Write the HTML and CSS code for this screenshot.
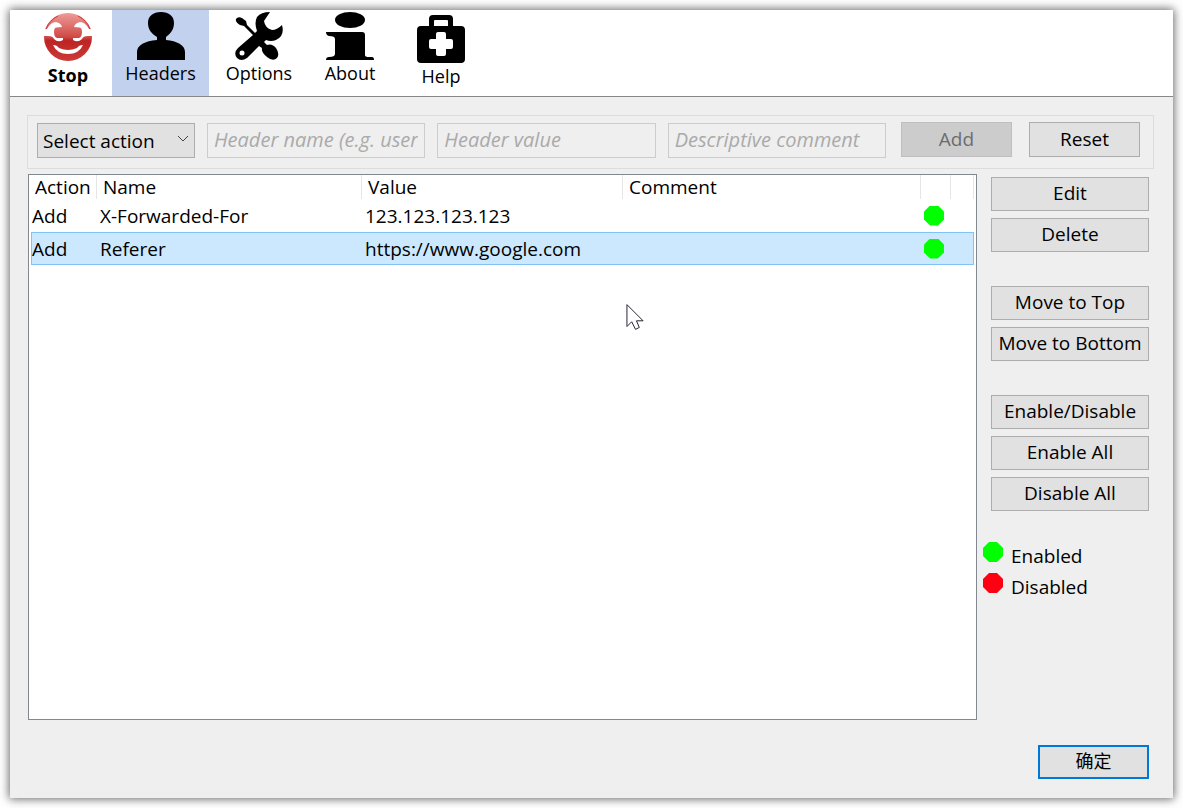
FILE: index.html
```html
<!DOCTYPE html>
<html lang="en">
<head>
<meta charset="utf-8">
<title>Headers</title>
<link rel="stylesheet" href="styles.css">
</head>
<body>
<main class="window">
  <nav class="toolbar" aria-label="Sections">
    <button type="button" class="tool tool-stop">
      <svg class="tool-icon" viewBox="0 0 48 48" aria-hidden="true">
        <defs>
          <linearGradient id="red" x1="0" y1="0" x2="0" y2="1">
            <stop offset="0" stop-color="#ee9c98"/>
            <stop offset=".5" stop-color="#d04a47"/>
            <stop offset=".58" stop-color="#bd2423"/>
            <stop offset="1" stop-color="#cc3a37"/>
          </linearGradient>
          <mask id="face">
            <circle cx="24" cy="24" r="24" fill="#fff"/>
            <g id="eye"><path d="M-2 17L3 16Q7 9 12 9Q17 10 18 14L12 14.500Q10 15 10 19Q10 24 13 25H19V27Q14 30 10 26Q9 23 4 23L-2 23Z" fill="#000"/></g>
            <use href="#eye" transform="translate(48 0) scale(-1 1)"/>
            <path d="M9 32Q13 32 15 35Q24 39 33 35Q35 32 39 32Q35 41 24 41Q13 41 9 32Z" fill="#000"/>
          </mask>
        </defs>
        <rect width="48" height="48" fill="url(#red)" mask="url(#face)"/>
        <path d="M2 16A23.500 23.500 0 0 1 14 3M46 16A23.500 23.500 0 0 0 34 3" fill="none" stroke="#cf3734"/>
      </svg>
      <span>Stop</span>
    </button>
    <button type="button" class="tool tool-headers" aria-current="page">
      <svg class="tool-icon" viewBox="0 0 48 48" aria-hidden="true"><path d="M24 0C32 0 37 4 37 11C37 18 33 22 29 25V28C40 29 48 33 48 40V48H0V40C0 33 8 29 20 28V25C15 22 11 18 11 11C11 4 16 0 24 0Z"/></svg>
      <span>Headers</span>
    </button>
    <button type="button" class="tool tool-options">
      <svg class="tool-icon" viewBox="0 0 48 48" aria-hidden="true"><path d="M1 7Q3 4 7 6L11 9L12 13L20 21L22 19Q19 11 22 5Q26 0 35 0L29 9Q30 16 37 18Q42 18 47 13Q50 24 41 28Q36 30 31 28L29 30L32 33Q37 31 41 36Q45 42 42 46Q38 50 32 45Q26 40 27 36L24 34L12 46Q6 50 2 46Q-2 41 3 36L18 23L9 14L5 13Q0 10 1 7Z"/><circle cx="7" cy="41" r="2.500" fill="#fff"/></svg>
      <span>Options</span>
    </button>
    <button type="button" class="tool tool-about">
      <svg class="tool-icon" viewBox="0 0 48 48" aria-hidden="true"><ellipse cx="24" cy="8" rx="15" ry="8"/><path d="M0 20H36Q39 20 39 23V43Q39 45 43 45H46Q48 45 48 48H0Q0 45 3 45Q9 45 9 42V27Q9 24 3 24Q0 23 0 20Z"/></svg>
      <span>About</span>
    </button>
    <button type="button" class="tool tool-help">
      <svg class="tool-icon" viewBox="0 0 48 48" aria-hidden="true"><path fill-rule="evenodd" d="M12 11V4Q12 0 16 0H32Q36 0 36 4V11H44Q48 11 48 15V44Q48 48 44 48H4Q0 48 0 44V15Q0 11 4 11ZM17 11H31V6Q31 5 30 5H18Q17 5 17 6ZM19 19V24H14Q12 24 12 26V32Q12 34 14 34H19V39Q19 41 21 41H27Q29 41 29 39V34H34Q36 34 36 32V26Q36 24 34 24H29V19Q29 17 27 17H21Q19 17 19 19Z"/></svg>
      <span>Help</span>
    </button>
  </nav>

  <form class="entry">
    <span class="select-wrap">
      <select class="field action" aria-label="Select action"><option>Select action</option></select>
      <svg class="chevron" viewBox="0 0 12 8" aria-hidden="true"><path d="M1 1L6 6L11 1"/></svg>
    </span>
    <input class="field text" type="text" aria-label="Header name" placeholder="Header name (e.g. user-agent)" disabled>
    <input class="field text" type="text" aria-label="Header value" placeholder="Header value" disabled>
    <input class="field text" type="text" aria-label="Descriptive comment" placeholder="Descriptive comment" disabled>
    <button class="button add" type="button" disabled>Add</button>
    <button class="button reset" type="reset">Reset</button>
  </form>

  <div class="body">
    <div class="list">
      <table class="headers">
        <colgroup><col class="col-action"><col class="col-name"><col class="col-value"><col><col class="col-state"><col class="col-end"></colgroup>
        <thead><tr><th>Action</th><th>Name</th><th>Value</th><th>Comment</th><th></th><th></th></tr></thead>
        <tbody>
          <tr><td>Add</td><td>X-Forwarded-For</td><td>123.123.123.123</td><td></td><td><span class="dot"></span></td><td></td></tr>
          <tr class="selected"><td>Add</td><td>Referer</td><td>https://www.google.com</td><td></td><td><span class="dot"></span></td><td></td></tr>
        </tbody>
      </table>
    </div>
    <aside class="side">
      <div class="group">
        <button class="button" type="button">Edit</button>
        <button class="button" type="button">Delete</button>
      </div>
      <div class="group">
        <button class="button" type="button">Move to Top</button>
        <button class="button" type="button">Move to Bottom</button>
      </div>
      <div class="group">
        <button class="button" type="button">Enable/Disable</button>
        <button class="button" type="button">Enable All</button>
        <button class="button" type="button">Disable All</button>
      </div>
      <ul class="legend">
        <li><span class="dot"></span><span>Enabled</span></li>
        <li><span class="dot off"></span><span>Disabled</span></li>
      </ul>
    </aside>
  </div>

  <footer class="footer"><button class="button ok" type="button" lang="zh-CN">确定</button></footer>
</main>
<svg class="cursor" viewBox="0 0 20 28" aria-hidden="true"><path d="M1 1V24L6 19L10 27L14 25L11 18H18Z"/></svg>
</body>
</html>
```
FILE: styles.css
```css
* {
  box-sizing: border-box;
}

body {
  margin: 0;
  padding: 10px;
  min-height: 100vh;
  display: flex;
  background: #fff;
  color: #000;
  font: 18px/24px "Open Sans", "Noto Sans CJK SC", sans-serif;
}

button, input, select {
  font: inherit;
  color: inherit;
}

.window {
  flex: 1;
  display: flex;
  flex-direction: column;
  min-width: 0;
  background: #efefef;
  box-shadow: 0 0 9px 1px rgba(0, 0, 0, .6);
}

.toolbar {
  display: flex;
  height: 87px;
  padding-left: 14px;
  background: #fff;
  border-bottom: 1px solid #868686;
}

.tool {
  display: flex;
  flex-direction: column;
  align-items: center;
  gap: 1px;
  width: 100px;
  padding: 2px 0 0;
  border: 0;
  background: none;
}

.tool-icon {
  width: 48px;
  height: 48px;
}

.tool-stop {
  gap: 2px;
  width: 88px;
  padding-top: 3px;
  font-weight: 700;
}

.tool-headers {
  width: 97px;
  background: #c2d1ed;
}

.tool-about {
  width: 82px;
}

.tool-help {
  padding-top: 5px;
}

.entry {
  display: flex;
  align-items: flex-end;
  margin: 18px 19px 0 17px;
  padding: 6px 13px 10px 9px;
  border: 1px solid #dcdcdc;
}

.field {
  height: 35px;
  border: 1px solid #ccc;
  border-radius: 0;
}

.select-wrap {
  position: relative;
  display: flex;
  width: 158px;
}

.action {
  width: 100%;
  padding: 0 24px 0 5px;
  appearance: none;
  background: #e1e1e1;
  border-color: #adadad;
  font-size: 19px;
}

.chevron {
  position: absolute;
  right: 6px;
  top: 12px;
  width: 12px;
  height: 8px;
  fill: none;
  stroke: #444;
  pointer-events: none;
}

.text {
  flex: 1;
  min-width: 0;
  margin-left: 12px;
  padding: 0 6px 2px;
  background: #efefef;
  font-size: 20px;
}

.text::placeholder {
  color: #aaa;
  font-style: italic;
}

.button {
  height: 34px;
  padding: 0 2px 2px;
  border: 1px solid #adadad;
  background: #e1e1e1;
  font-size: 19px;
  white-space: nowrap;
}

.add, .reset {
  width: 111px;
  height: 35px;
  margin-bottom: 1px;
}

.add {
  margin-left: 15px;
  background: #ccc;
  border-color: #bfbfbf;
  color: #6d6d6d;
}

.reset {
  margin-left: 17px;
}

.body {
  flex: 1;
  display: flex;
  margin: 5px 24px 0 18px;
  font-size: 19px;
}

.list {
  flex: 1;
  padding: 0 2px;
  background: #fff;
  border: 1px solid #828790;
}

.headers {
  width: 100%;
  table-layout: fixed;
  border-collapse: separate;
  border-spacing: 0;
}

.col-action { width: 66px; }
.col-name { width: 265px; }
.col-value { width: 261px; }
.col-state { width: 30px; }
.col-end { width: 23px; }

th {
  height: 24px;
  padding: 0 0 0 4px;
  border-right: 1px solid #e5e5e5;
  font-weight: 400;
  text-align: left;
}

th + th {
  padding-left: 6px;
}

td {
  height: 33px;
  padding: 0 0 0 3px;
}

td:first-child {
  padding-left: 1px;
}

.selected td {
  background: #cce8ff;
  border: solid #7fc3f7;
  border-width: 1px 0;
}

.selected td:first-child {
  padding-left: 0;
  border-left-width: 1px;
}

.selected td:last-child {
  border-right-width: 1px;
}

.dot {
  display: block;
  width: 20px;
  height: 20px;
  background: #0f0;
  clip-path: polygon(30% 0, 70% 0, 100% 30%, 100% 70%, 70% 100%, 30% 100%, 0 70%, 0 30%);
}

.off {
  background: #ff0012;
}

.side {
  display: flex;
  flex-direction: column;
  gap: 34px;
  width: 172px;
  padding: 3px 0 0 14px;
}

.group {
  display: flex;
  flex-direction: column;
  gap: 7px;
}

.legend {
  display: flex;
  flex-direction: column;
  gap: 7px;
  margin: -3px 0 0 -8px;
  padding: 0;
  list-style: none;
}

.legend li {
  display: flex;
  gap: 8px;
  align-items: flex-start;
}

.legend li span + span {
  padding-top: 4px;
  line-height: 20px;
}

.footer {
  display: flex;
  justify-content: flex-end;
  padding: 25px 24px 19px;
}

.ok {
  width: 111px;
  border: 2px solid #0078d7;
  font-size: 18px;
}

.cursor {
  position: absolute;
  left: 626px;
  top: 303px;
  width: 19px;
  height: 28px;
  fill: #fff;
  stroke: #1a1a2a;
}
```
